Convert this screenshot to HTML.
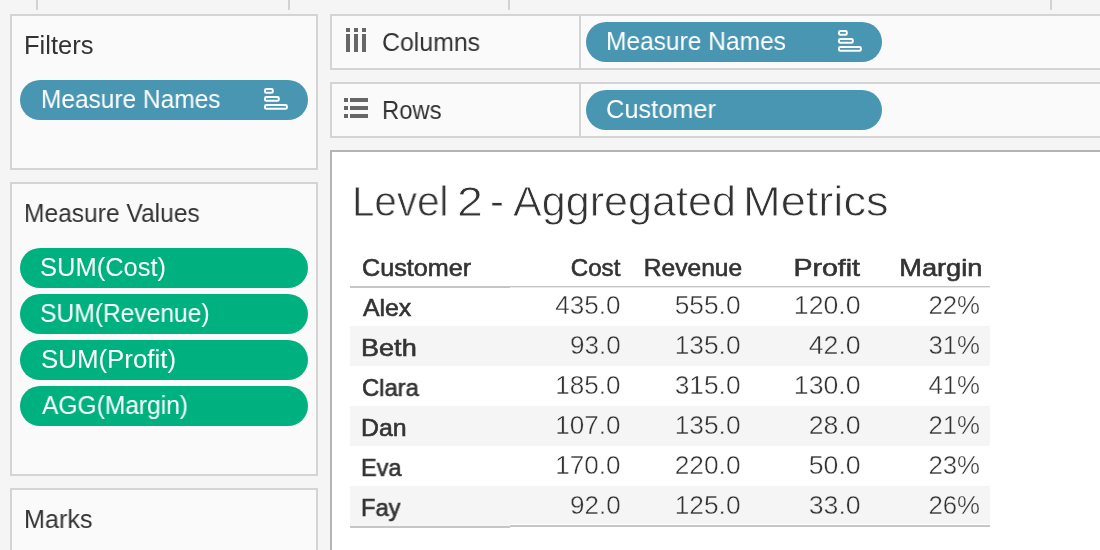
<!DOCTYPE html>
<html><head><meta charset="utf-8"><style>
html,body{margin:0;padding:0;}
body{width:1100px;height:550px;overflow:hidden;position:relative;background:#f5f5f5;font-family:"Liberation Sans", sans-serif;}
</style></head><body>
<div style="position:absolute;left:36px;top:0px;width:2px;height:10px;background:#d2d2d2;"></div>
<div style="position:absolute;left:288px;top:0px;width:2px;height:10px;background:#d2d2d2;"></div>
<div style="position:absolute;left:508px;top:0px;width:2px;height:10px;background:#d2d2d2;"></div>
<div style="position:absolute;left:1050px;top:0px;width:2px;height:10px;background:#d2d2d2;"></div>
<div style="position:absolute;left:10px;top:14px;width:308px;height:156px;box-sizing:border-box;border:2px solid #d4d4d4;background:#fafafa;"></div>
<div style="position:absolute;left:10px;top:182px;width:308px;height:294px;box-sizing:border-box;border:2px solid #d4d4d4;background:#fafafa;"></div>
<div style="position:absolute;left:10px;top:488px;width:308px;height:73px;box-sizing:border-box;border:2px solid #d4d4d4;background:#fafafa;"></div>
<div style="position:absolute;left:24.00px;top:33.41px;font-size:25.5px;line-height:25.5px;font-weight:400;color:#333333;white-space:pre;transform:scaleX(0.9932);transform-origin:0 0;will-change:transform;">Filters</div>
<div style="position:absolute;left:23.50px;top:201.41px;font-size:25.5px;line-height:25.5px;font-weight:400;color:#333333;white-space:pre;transform:scaleX(0.9638);transform-origin:0 0;will-change:transform;">Measure Values</div>
<div style="position:absolute;left:24.00px;top:507.41px;font-size:25.5px;line-height:25.5px;font-weight:400;color:#333333;white-space:pre;transform:scaleX(0.9858);transform-origin:0 0;will-change:transform;">Marks</div>
<div style="position:absolute;left:20px;top:80px;width:288px;height:40px;background:#4996b2;border-radius:20px;"></div>
<div style="position:absolute;left:40.50px;top:87.41px;font-size:25.5px;line-height:25.5px;font-weight:400;color:#ffffff;white-space:pre;transform:scaleX(0.9592);transform-origin:0 0;will-change:transform;">Measure Names</div>
<svg style="position:absolute;left:264px;top:88px" width="26" height="24" viewBox="0 0 26 24"><rect x="1" y="1" width="7.8" height="3.8" rx="1.3" fill="none" stroke="#fff" stroke-width="2"/><rect x="1" y="9" width="13.8" height="3.8" rx="1.3" fill="none" stroke="#fff" stroke-width="2"/><rect x="1" y="17" width="21.9" height="3.8" rx="1.3" fill="none" stroke="#fff" stroke-width="2"/></svg>
<div style="position:absolute;left:20px;top:248px;width:288px;height:40px;background:#00b180;border-radius:20px;"></div>
<div style="position:absolute;left:40.00px;top:255.41px;font-size:25.5px;line-height:25.5px;font-weight:400;color:#ffffff;white-space:pre;transform:scaleX(1.0001);transform-origin:0 0;will-change:transform;">SUM(Cost)</div>
<div style="position:absolute;left:20px;top:294px;width:288px;height:40px;background:#00b180;border-radius:20px;"></div>
<div style="position:absolute;left:40.00px;top:301.41px;font-size:25.5px;line-height:25.5px;font-weight:400;color:#ffffff;white-space:pre;transform:scaleX(0.9651);transform-origin:0 0;will-change:transform;">SUM(Revenue)</div>
<div style="position:absolute;left:20px;top:340px;width:288px;height:40px;background:#00b180;border-radius:20px;"></div>
<div style="position:absolute;left:40.60px;top:347.41px;font-size:25.5px;line-height:25.5px;font-weight:400;color:#ffffff;white-space:pre;transform:scaleX(1.0142);transform-origin:0 0;will-change:transform;">SUM(Profit)</div>
<div style="position:absolute;left:20px;top:386px;width:288px;height:40px;background:#00b180;border-radius:20px;"></div>
<div style="position:absolute;left:42.00px;top:393.41px;font-size:25.5px;line-height:25.5px;font-weight:400;color:#ffffff;white-space:pre;transform:scaleX(0.9632);transform-origin:0 0;will-change:transform;">AGG(Margin)</div>
<div style="position:absolute;left:330px;top:14px;width:781px;height:56px;box-sizing:border-box;border:2px solid #d4d4d4;background:#fafafa;"></div>
<div style="position:absolute;left:579px;top:16px;width:2px;height:52px;background:#d4d4d4;"></div>
<div style="position:absolute;left:330px;top:82px;width:781px;height:56px;box-sizing:border-box;border:2px solid #d4d4d4;background:#fafafa;"></div>
<div style="position:absolute;left:579px;top:84px;width:2px;height:52px;background:#d4d4d4;"></div>
<div style="position:absolute;left:346px;top:28px;width:4px;height:4px;background:#666;"></div>
<div style="position:absolute;left:346px;top:34px;width:4px;height:18px;background:#666;"></div>
<div style="position:absolute;left:354px;top:28px;width:4px;height:4px;background:#666;"></div>
<div style="position:absolute;left:354px;top:34px;width:4px;height:18px;background:#666;"></div>
<div style="position:absolute;left:362px;top:28px;width:4px;height:4px;background:#666;"></div>
<div style="position:absolute;left:362px;top:34px;width:4px;height:18px;background:#666;"></div>
<div style="position:absolute;left:344px;top:98px;width:4px;height:4px;background:#666;"></div>
<div style="position:absolute;left:350px;top:98px;width:18px;height:4px;background:#666;"></div>
<div style="position:absolute;left:344px;top:106px;width:4px;height:4px;background:#666;"></div>
<div style="position:absolute;left:350px;top:106px;width:18px;height:4px;background:#666;"></div>
<div style="position:absolute;left:344px;top:114px;width:4px;height:4px;background:#666;"></div>
<div style="position:absolute;left:350px;top:114px;width:18px;height:4px;background:#666;"></div>
<div style="position:absolute;left:381.50px;top:30.41px;font-size:25.5px;line-height:25.5px;font-weight:400;color:#333333;white-space:pre;transform:scaleX(0.9749);transform-origin:0 0;will-change:transform;">Columns</div>
<div style="position:absolute;left:382.00px;top:98.41px;font-size:25.5px;line-height:25.5px;font-weight:400;color:#333333;white-space:pre;transform:scaleX(0.9344);transform-origin:0 0;will-change:transform;">Rows</div>
<div style="position:absolute;left:586px;top:22px;width:296px;height:40px;background:#4996b2;border-radius:20px;"></div>
<div style="position:absolute;left:606.00px;top:29.41px;font-size:25.5px;line-height:25.5px;font-weight:400;color:#ffffff;white-space:pre;transform:scaleX(0.9618);transform-origin:0 0;will-change:transform;">Measure Names</div>
<svg style="position:absolute;left:838px;top:30px" width="26" height="24" viewBox="0 0 26 24"><rect x="1" y="1" width="7.8" height="3.8" rx="1.3" fill="none" stroke="#fff" stroke-width="2"/><rect x="1" y="9" width="13.8" height="3.8" rx="1.3" fill="none" stroke="#fff" stroke-width="2"/><rect x="1" y="17" width="21.9" height="3.8" rx="1.3" fill="none" stroke="#fff" stroke-width="2"/></svg>
<div style="position:absolute;left:586px;top:90px;width:296px;height:40px;background:#4996b2;border-radius:20px;"></div>
<div style="position:absolute;left:606.00px;top:97.41px;font-size:25.5px;line-height:25.5px;font-weight:400;color:#ffffff;white-space:pre;transform:scaleX(0.9955);transform-origin:0 0;will-change:transform;">Customer</div>
<div style="position:absolute;left:330px;top:150px;width:781px;height:451px;box-sizing:border-box;border:2px solid #b4b4b4;background:#ffffff;"></div>
<div style="position:absolute;left:352.00px;top:181.45px;font-size:42px;line-height:42px;font-weight:400;color:#333333;white-space:pre;transform:scaleX(0.9610);transform-origin:0 0;will-change:transform;-webkit-text-stroke:0.8px #ffffff;">Level</div>
<div style="position:absolute;left:457.00px;top:181.45px;font-size:42px;line-height:42px;font-weight:400;color:#333333;white-space:pre;transform:scaleX(1.1080);transform-origin:0 0;will-change:transform;-webkit-text-stroke:0.8px #ffffff;">2</div>
<div style="position:absolute;left:490.00px;top:181.45px;font-size:42px;line-height:42px;font-weight:400;color:#333333;white-space:pre;transform:scaleX(0.9835);transform-origin:0 0;will-change:transform;-webkit-text-stroke:0.8px #ffffff;">-</div>
<div style="position:absolute;left:513.00px;top:181.45px;font-size:42px;line-height:42px;font-weight:400;color:#333333;white-space:pre;transform:scaleX(1.0262);transform-origin:0 0;will-change:transform;-webkit-text-stroke:0.8px #ffffff;">Aggregated</div>
<div style="position:absolute;left:743.00px;top:181.45px;font-size:42px;line-height:42px;font-weight:400;color:#333333;white-space:pre;transform:scaleX(1.0758);transform-origin:0 0;will-change:transform;-webkit-text-stroke:0.8px #ffffff;">Metrics</div>
<div style="position:absolute;left:350px;top:326px;width:640px;height:40px;background:#f5f5f5;"></div>
<div style="position:absolute;left:350px;top:406px;width:640px;height:40px;background:#f5f5f5;"></div>
<div style="position:absolute;left:350px;top:486px;width:640px;height:40px;background:#f5f5f5;"></div>
<div style="position:absolute;left:350px;top:286px;width:160px;height:2px;background:#c6c6c6;"></div>
<div style="position:absolute;left:510px;top:286px;width:480px;height:1px;background:#c6c6c6;"></div>
<div style="position:absolute;left:510px;top:287px;width:480px;height:1px;background:#e8e8e8;"></div>
<div style="position:absolute;left:510px;top:524px;width:480px;height:1px;background:#ffffff;"></div>
<div style="position:absolute;left:350px;top:526px;width:160px;height:2px;background:#c6c6c6;"></div>
<div style="position:absolute;left:510px;top:525px;width:480px;height:2px;background:#c6c6c6;"></div>
<div style="position:absolute;left:361.50px;top:255.68px;font-size:24px;line-height:24px;font-weight:400;color:#333333;white-space:pre;transform:scaleX(1.0489);transform-origin:0 0;will-change:transform;-webkit-text-stroke:0.6px #333333;">Customer</div>
<div style="position:absolute;right:480.00px;top:255.68px;font-size:24px;line-height:24px;font-weight:400;color:#333333;white-space:pre;text-align:right;transform:scaleX(1.0030);transform-origin:100% 0;will-change:transform;-webkit-text-stroke:0.6px #333333;">Cost</div>
<div style="position:absolute;right:358.00px;top:255.68px;font-size:24px;line-height:24px;font-weight:400;color:#333333;white-space:pre;text-align:right;transform:scaleX(1.0223);transform-origin:100% 0;will-change:transform;-webkit-text-stroke:0.6px #333333;">Revenue</div>
<div style="position:absolute;right:239.50px;top:255.68px;font-size:24px;line-height:24px;font-weight:400;color:#333333;white-space:pre;text-align:right;transform:scaleX(1.1885);transform-origin:100% 0;will-change:transform;-webkit-text-stroke:0.6px #333333;">Profit</div>
<div style="position:absolute;right:117.50px;top:255.68px;font-size:24px;line-height:24px;font-weight:400;color:#333333;white-space:pre;text-align:right;transform:scaleX(1.1328);transform-origin:100% 0;will-change:transform;-webkit-text-stroke:0.6px #333333;">Margin</div>
<div style="position:absolute;left:362.50px;top:295.68px;font-size:24px;line-height:24px;font-weight:400;color:#333333;white-space:pre;transform:scaleX(1.0342);transform-origin:0 0;will-change:transform;-webkit-text-stroke:0.6px #333333;">Alex</div>
<div style="position:absolute;right:479.00px;top:292.84px;font-size:25px;line-height:25px;font-weight:400;color:#333333;white-space:pre;text-align:right;transform:scaleX(1.0422);transform-origin:100% 0;will-change:transform;-webkit-text-stroke:0.4px #ffffff;">435.0</div>
<div style="position:absolute;right:359.00px;top:292.84px;font-size:25px;line-height:25px;font-weight:400;color:#333333;white-space:pre;text-align:right;transform:scaleX(1.0532);transform-origin:100% 0;will-change:transform;-webkit-text-stroke:0.4px #ffffff;">555.0</div>
<div style="position:absolute;right:239.00px;top:292.84px;font-size:25px;line-height:25px;font-weight:400;color:#333333;white-space:pre;text-align:right;transform:scaleX(1.0669);transform-origin:100% 0;will-change:transform;-webkit-text-stroke:0.4px #ffffff;">120.0</div>
<div style="position:absolute;right:119.50px;top:292.84px;font-size:25px;line-height:25px;font-weight:400;color:#333333;white-space:pre;text-align:right;transform:scaleX(1.0323);transform-origin:100% 0;will-change:transform;-webkit-text-stroke:0.4px #ffffff;">22%</div>
<div style="position:absolute;left:361.00px;top:335.68px;font-size:24px;line-height:24px;font-weight:400;color:#333333;white-space:pre;transform:scaleX(1.1281);transform-origin:0 0;will-change:transform;-webkit-text-stroke:0.6px #333333;">Beth</div>
<div style="position:absolute;right:479.00px;top:332.84px;font-size:25px;line-height:25px;font-weight:400;color:#333333;white-space:pre;text-align:right;transform:scaleX(1.0422);transform-origin:100% 0;will-change:transform;-webkit-text-stroke:0.4px #f5f5f5;">93.0</div>
<div style="position:absolute;right:359.00px;top:332.84px;font-size:25px;line-height:25px;font-weight:400;color:#333333;white-space:pre;text-align:right;transform:scaleX(1.0532);transform-origin:100% 0;will-change:transform;-webkit-text-stroke:0.4px #f5f5f5;">135.0</div>
<div style="position:absolute;right:239.00px;top:332.84px;font-size:25px;line-height:25px;font-weight:400;color:#333333;white-space:pre;text-align:right;transform:scaleX(1.0669);transform-origin:100% 0;will-change:transform;-webkit-text-stroke:0.4px #f5f5f5;">42.0</div>
<div style="position:absolute;right:119.50px;top:332.84px;font-size:25px;line-height:25px;font-weight:400;color:#333333;white-space:pre;text-align:right;transform:scaleX(1.0323);transform-origin:100% 0;will-change:transform;-webkit-text-stroke:0.4px #f5f5f5;">31%</div>
<div style="position:absolute;left:362.00px;top:375.68px;font-size:24px;line-height:24px;font-weight:400;color:#333333;white-space:pre;transform:scaleX(0.9901);transform-origin:0 0;will-change:transform;-webkit-text-stroke:0.6px #333333;">Clara</div>
<div style="position:absolute;right:479.00px;top:372.84px;font-size:25px;line-height:25px;font-weight:400;color:#333333;white-space:pre;text-align:right;transform:scaleX(1.0422);transform-origin:100% 0;will-change:transform;-webkit-text-stroke:0.4px #ffffff;">185.0</div>
<div style="position:absolute;right:359.00px;top:372.84px;font-size:25px;line-height:25px;font-weight:400;color:#333333;white-space:pre;text-align:right;transform:scaleX(1.0532);transform-origin:100% 0;will-change:transform;-webkit-text-stroke:0.4px #ffffff;">315.0</div>
<div style="position:absolute;right:239.00px;top:372.84px;font-size:25px;line-height:25px;font-weight:400;color:#333333;white-space:pre;text-align:right;transform:scaleX(1.0669);transform-origin:100% 0;will-change:transform;-webkit-text-stroke:0.4px #ffffff;">130.0</div>
<div style="position:absolute;right:119.50px;top:372.84px;font-size:25px;line-height:25px;font-weight:400;color:#333333;white-space:pre;text-align:right;transform:scaleX(1.0323);transform-origin:100% 0;will-change:transform;-webkit-text-stroke:0.4px #ffffff;">41%</div>
<div style="position:absolute;left:361.00px;top:415.68px;font-size:24px;line-height:24px;font-weight:400;color:#333333;white-space:pre;transform:scaleX(1.0346);transform-origin:0 0;will-change:transform;-webkit-text-stroke:0.6px #333333;">Dan</div>
<div style="position:absolute;right:479.00px;top:412.84px;font-size:25px;line-height:25px;font-weight:400;color:#333333;white-space:pre;text-align:right;transform:scaleX(1.0422);transform-origin:100% 0;will-change:transform;-webkit-text-stroke:0.4px #f5f5f5;">107.0</div>
<div style="position:absolute;right:359.00px;top:412.84px;font-size:25px;line-height:25px;font-weight:400;color:#333333;white-space:pre;text-align:right;transform:scaleX(1.0532);transform-origin:100% 0;will-change:transform;-webkit-text-stroke:0.4px #f5f5f5;">135.0</div>
<div style="position:absolute;right:239.00px;top:412.84px;font-size:25px;line-height:25px;font-weight:400;color:#333333;white-space:pre;text-align:right;transform:scaleX(1.0669);transform-origin:100% 0;will-change:transform;-webkit-text-stroke:0.4px #f5f5f5;">28.0</div>
<div style="position:absolute;right:119.50px;top:412.84px;font-size:25px;line-height:25px;font-weight:400;color:#333333;white-space:pre;text-align:right;transform:scaleX(1.0323);transform-origin:100% 0;will-change:transform;-webkit-text-stroke:0.4px #f5f5f5;">21%</div>
<div style="position:absolute;left:361.00px;top:455.68px;font-size:24px;line-height:24px;font-weight:400;color:#333333;white-space:pre;transform:scaleX(0.9779);transform-origin:0 0;will-change:transform;-webkit-text-stroke:0.6px #333333;">Eva</div>
<div style="position:absolute;right:479.00px;top:452.84px;font-size:25px;line-height:25px;font-weight:400;color:#333333;white-space:pre;text-align:right;transform:scaleX(1.0422);transform-origin:100% 0;will-change:transform;-webkit-text-stroke:0.4px #ffffff;">170.0</div>
<div style="position:absolute;right:359.00px;top:452.84px;font-size:25px;line-height:25px;font-weight:400;color:#333333;white-space:pre;text-align:right;transform:scaleX(1.0532);transform-origin:100% 0;will-change:transform;-webkit-text-stroke:0.4px #ffffff;">220.0</div>
<div style="position:absolute;right:239.00px;top:452.84px;font-size:25px;line-height:25px;font-weight:400;color:#333333;white-space:pre;text-align:right;transform:scaleX(1.0669);transform-origin:100% 0;will-change:transform;-webkit-text-stroke:0.4px #ffffff;">50.0</div>
<div style="position:absolute;right:119.50px;top:452.84px;font-size:25px;line-height:25px;font-weight:400;color:#333333;white-space:pre;text-align:right;transform:scaleX(1.0323);transform-origin:100% 0;will-change:transform;-webkit-text-stroke:0.4px #ffffff;">23%</div>
<div style="position:absolute;left:361.00px;top:495.68px;font-size:24px;line-height:24px;font-weight:400;color:#333333;white-space:pre;transform:scaleX(0.9859);transform-origin:0 0;will-change:transform;-webkit-text-stroke:0.6px #333333;">Fay</div>
<div style="position:absolute;right:479.00px;top:492.84px;font-size:25px;line-height:25px;font-weight:400;color:#333333;white-space:pre;text-align:right;transform:scaleX(1.0422);transform-origin:100% 0;will-change:transform;-webkit-text-stroke:0.4px #f5f5f5;">92.0</div>
<div style="position:absolute;right:359.00px;top:492.84px;font-size:25px;line-height:25px;font-weight:400;color:#333333;white-space:pre;text-align:right;transform:scaleX(1.0532);transform-origin:100% 0;will-change:transform;-webkit-text-stroke:0.4px #f5f5f5;">125.0</div>
<div style="position:absolute;right:239.00px;top:492.84px;font-size:25px;line-height:25px;font-weight:400;color:#333333;white-space:pre;text-align:right;transform:scaleX(1.0669);transform-origin:100% 0;will-change:transform;-webkit-text-stroke:0.4px #f5f5f5;">33.0</div>
<div style="position:absolute;right:119.50px;top:492.84px;font-size:25px;line-height:25px;font-weight:400;color:#333333;white-space:pre;text-align:right;transform:scaleX(1.0323);transform-origin:100% 0;will-change:transform;-webkit-text-stroke:0.4px #f5f5f5;">26%</div>
</body></html>
